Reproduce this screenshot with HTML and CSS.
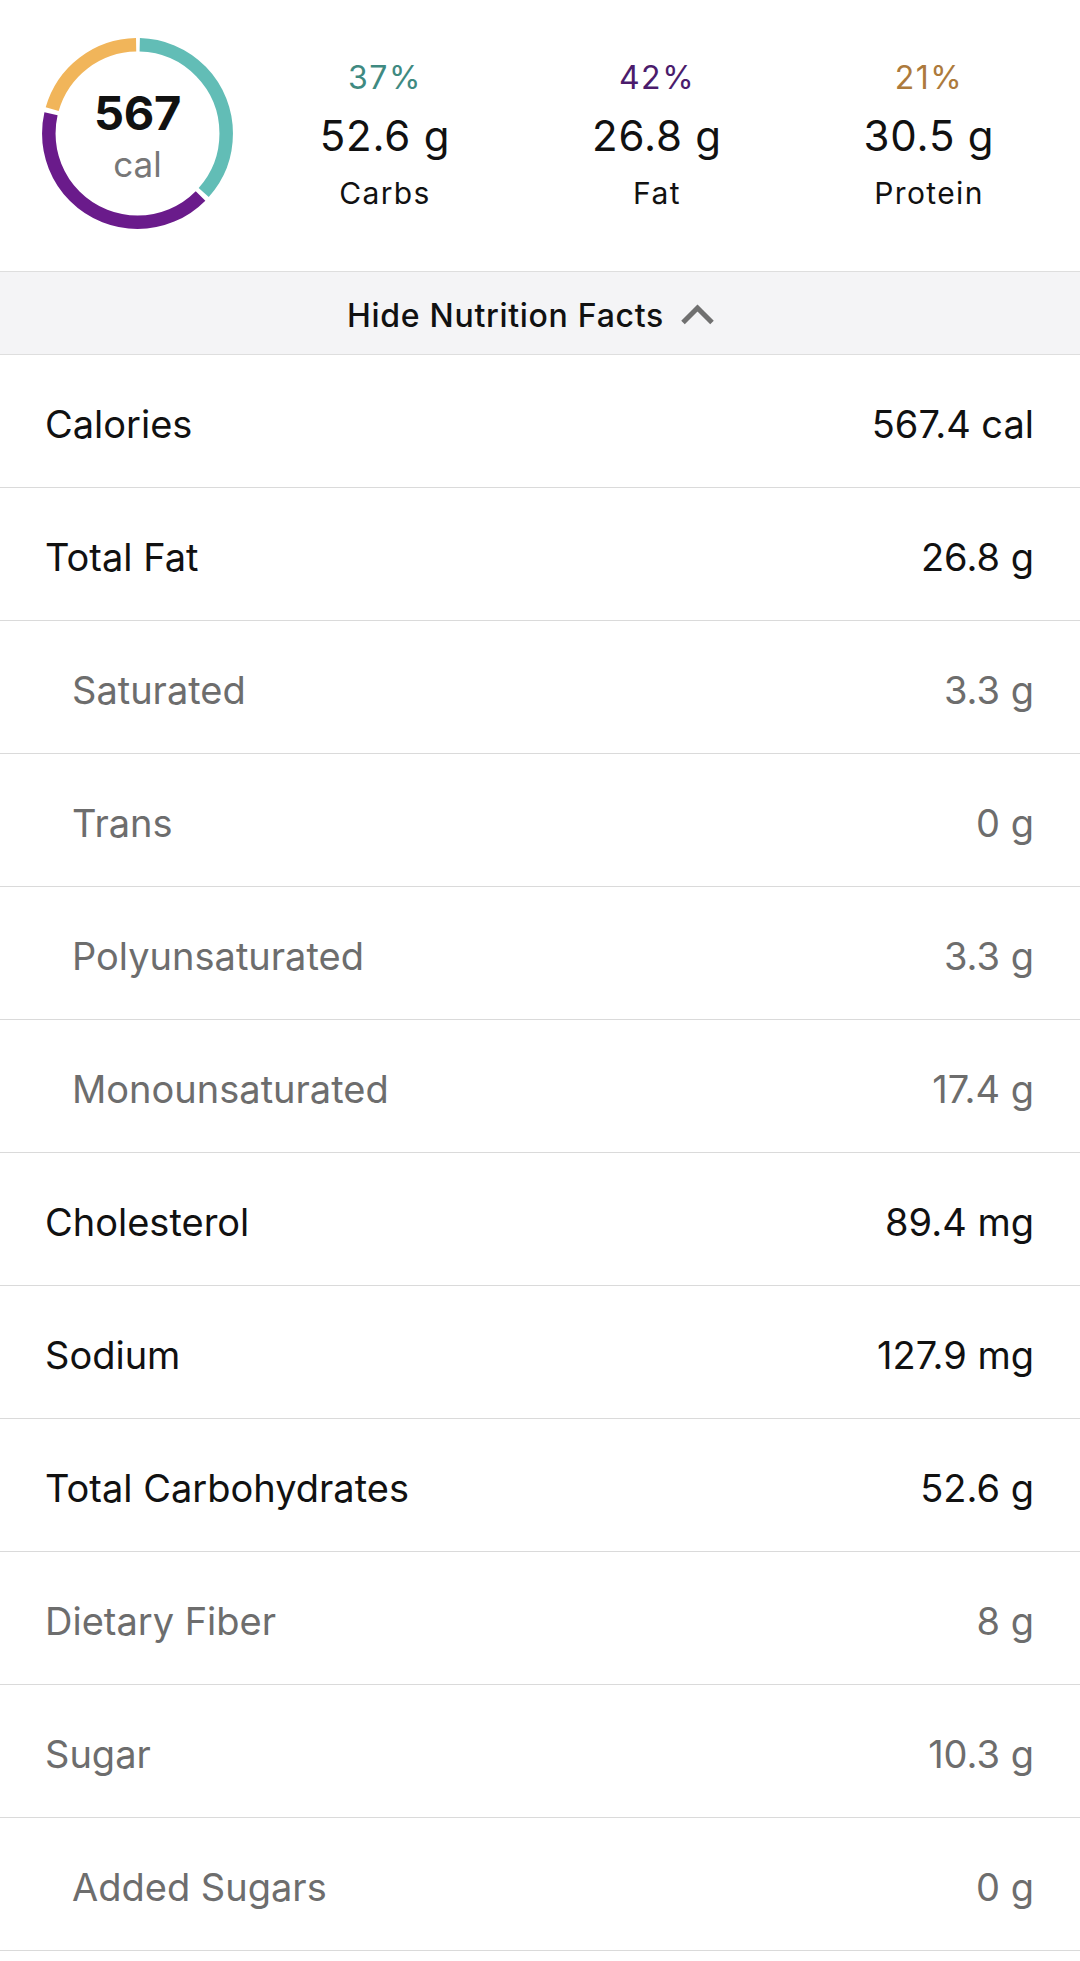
FILE: index.html
```html
<!DOCTYPE html>
<html>
<head>
<meta charset="utf-8">
<link rel="stylesheet" href="styles.css">
</head>
<body>
<div class="summary">
  <div class="donut">
    <svg class="ring" width="191" height="191" viewBox="0 0 191 191">
      <g transform="rotate(-90 95.5 95.5)">
        <circle cx="95.5" cy="95.5" r="88.7" fill="none" stroke="#62bdb6" stroke-width="13.5" stroke-dasharray="201.3 600" stroke-dashoffset="-2.3"/>
        <circle cx="95.5" cy="95.5" r="88.7" fill="none" stroke="#6a1b8b" stroke-width="13.5" stroke-dasharray="229 600" stroke-dashoffset="-208.2"/>
        <circle cx="95.5" cy="95.5" r="88.7" fill="none" stroke="#f1b55a" stroke-width="13.5" stroke-dasharray="113 600" stroke-dashoffset="-442"/>
      </g>
    </svg>
    <div class="kcal">567</div>
    <div class="kcal-unit">cal</div>
  </div>
  <div class="macros">
    <div class="macro">
      <div class="pct pct-carbs">37%</div>
      <div class="amount">52.6 g</div>
      <div class="label">Carbs</div>
    </div>
    <div class="macro">
      <div class="pct pct-fat">42%</div>
      <div class="amount">26.8 g</div>
      <div class="label">Fat</div>
    </div>
    <div class="macro">
      <div class="pct pct-protein">21%</div>
      <div class="amount">30.5 g</div>
      <div class="label">Protein</div>
    </div>
  </div>
</div>
<div class="toggle">
  <span>Hide Nutrition Facts</span>
  <svg class="chev" width="35" height="21" viewBox="0 0 35 21"><path d="M3 18.5 L17.5 4 L32 18.5" fill="none" stroke="#707070" stroke-width="5" stroke-linejoin="miter"/></svg>
</div>
<div class="facts">
  <div class="row"><span>Calories</span><span>567.4 cal</span></div>
  <div class="row"><span>Total Fat</span><span>26.8 g</span></div>
  <div class="row sub"><span>Saturated</span><span>3.3 g</span></div>
  <div class="row sub"><span>Trans</span><span>0 g</span></div>
  <div class="row sub"><span>Polyunsaturated</span><span>3.3 g</span></div>
  <div class="row sub"><span>Monounsaturated</span><span>17.4 g</span></div>
  <div class="row"><span>Cholesterol</span><span>89.4 mg</span></div>
  <div class="row"><span>Sodium</span><span>127.9 mg</span></div>
  <div class="row"><span>Total Carbohydrates</span><span>52.6 g</span></div>
  <div class="row muted"><span>Dietary Fiber</span><span>8 g</span></div>
  <div class="row muted"><span>Sugar</span><span>10.3 g</span></div>
  <div class="row sub"><span>Added Sugars</span><span>0 g</span></div>
</div>
</body>
</html>
```
FILE: styles.css
```css
* { box-sizing: border-box; }
body {
  margin: 0;
  background: #fff;
  font-family: Inter, "Noto Sans", sans-serif;
  color: #111;
}
.summary {
  display: flex;
  height: 272px;
  border-bottom: 1px solid #dedede;
}
.donut {
  position: relative;
  flex: none;
  width: 191px;
  height: 191px;
  margin: 38px 16px 0 42px;
  display: flex;
  flex-direction: column;
  align-items: center;
  padding-top: 50px;
}
.ring { position: absolute; left: 0; top: 0; }
.kcal {
  font-size: 47px;
  font-weight: 700;
  line-height: 50px;
  letter-spacing: -0.3px;
}
.kcal-unit {
  font-size: 35px;
  line-height: 40px;
  margin-top: 6px;
  color: #777;
}
.macros {
  display: grid;
  grid-template-columns: repeat(3, 272px);
  padding-top: 58px;
}
.macro {
  display: flex;
  flex-direction: column;
  align-items: center;
}
.pct { font-size: 32px; line-height: 40px; letter-spacing: 1.5px; }
.pct-carbs { color: #3f8a81; }
.pct-fat { color: #4b1c6c; }
.pct-protein { color: #ad7a3c; }
.amount { font-size: 42px; line-height: 75px; letter-spacing: 0.8px; }
.label { font-size: 30px; line-height: 40px; letter-spacing: 1.4px; }
.toggle {
  height: 83px;
  background: #f4f4f6;
  border-bottom: 1px solid #dedede;
  display: flex;
  align-items: center;
  justify-content: center;
  gap: 16px;
  font-size: 32px;
  font-weight: 500;
  letter-spacing: 0.7px;
  padding: 4px 18px 0 0;
}
.chev { margin-top: -2px; }
.facts { display: flex; flex-direction: column; }
.row {
  height: 133px;
  border-bottom: 1px solid #dadada;
  display: flex;
  align-items: center;
  justify-content: space-between;
  padding: 5px 46px 0 45px;
  font-size: 38px;
  color: #111;
}
.row.sub { padding-left: 72px; color: #6d6d6d; }
.row.muted { color: #6d6d6d; }
```
